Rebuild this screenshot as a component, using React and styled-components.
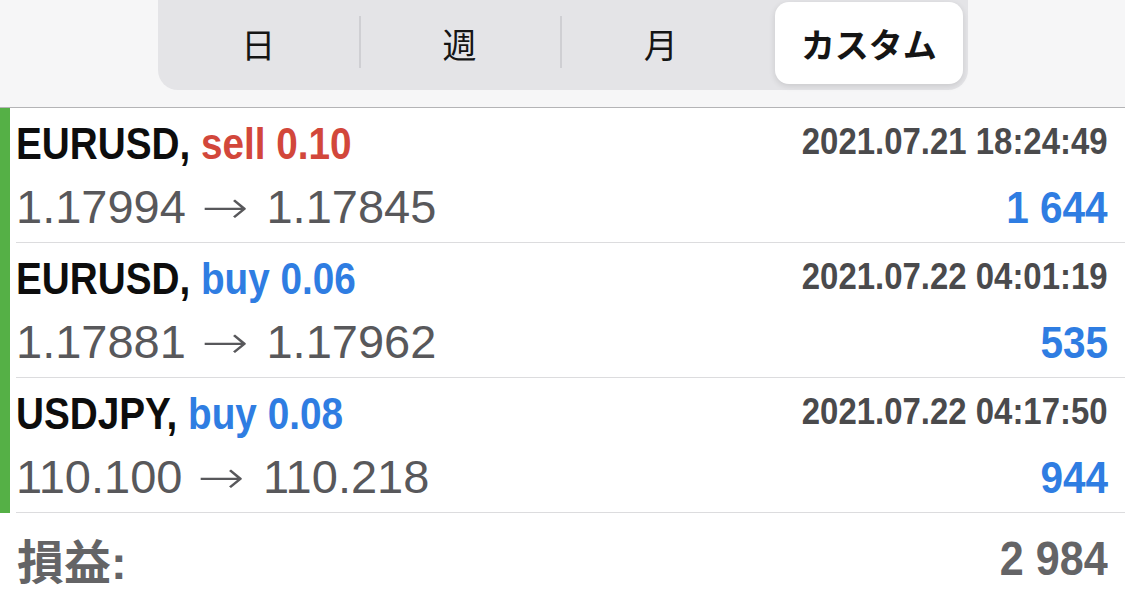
import styled, { createGlobalStyle } from 'styled-components';
import React from 'react';

const GlobalStyle = createGlobalStyle`
  html, body {
    margin: 0;
    padding: 0;
    background: #ffffff;
  }
  body {
    font-family: "Liberation Sans", Arial, "Noto Sans CJK JP", sans-serif;
    overflow: hidden;
  }
`;

const Page = styled.div`
  width: 1125px;
  height: 599px;
  display: flex;
  flex-direction: column;
  background: #ffffff;
`;

const Header = styled.div`
  flex-shrink: 0;
  height: 107px;
  display: flex;
  justify-content: center;
  align-items: flex-start;
  background: #f6f6f7;
  border-bottom: 1px solid #b4b4b6;
`;

const Segmented = styled.div`
  width: 810px;
  height: 90px;
  box-sizing: border-box;
  padding: 2px 5px 6px 0;
  display: grid;
  grid-template-columns: repeat(4, 1fr);
  background: #e4e4e7;
  border-radius: 0 0 20px 20px;
`;

const Segment = styled.div`
  position: relative;
  display: flex;
  align-items: center;
  justify-content: center;
  font-family: "Noto Sans CJK JP", sans-serif;
  font-size: 34px;
  font-weight: ${(p) => (p.$active ? 700 : 400)};
  color: #151515;
  border-radius: 14px;
  background: ${(p) => (p.$active ? '#ffffff' : 'transparent')};
  box-shadow: ${(p) => (p.$active ? '0 2px 6px rgba(0,0,0,0.12)' : 'none')};
  margin-left: ${(p) => (p.$active ? '14px' : '0')};

  &::before {
    content: '';
    display: ${(p) => (p.$divider ? 'block' : 'none')};
    position: absolute;
    left: 0;
    top: 14px;
    bottom: 16px;
    width: 2px;
    background: #cfcfd3;
  }
`;

const List = styled.div`
  flex-shrink: 0;
  display: flex;
  flex-direction: column;
  border-left: 10px solid #55b046;
`;

const Row = styled.div`
  margin-left: 6px;
  padding: 8px 17px 0 0;
  height: 126px;
  display: flex;
  flex-direction: column;
  border-bottom: 1px solid #dcdcde;
`;

const Line = styled.div`
  height: ${(p) => p.$h}px;
  display: flex;
  justify-content: space-between;
  align-items: ${(p) => (p.$baseline ? 'baseline' : 'center')};
`;

/* iOS uses a condensed bold face; squeeze Liberation Sans Bold to match */
const Narrow = styled.div`
  display: inline-block;
  font-family: "Liberation Sans", Arial, sans-serif;
  font-weight: 700;
  white-space: nowrap;
  transform: scaleX(${(p) => p.$sx || 0.86});
  transform-origin: ${(p) => (p.$right ? 'right' : 'left')} center;
`;

const Title = styled(Narrow)`
  font-size: 45px;
  line-height: 56px;
  color: #0d0d0d;
`;

const Side = styled.span`
  color: ${(p) => (p.$sell ? '#d2473b' : '#2f7de2')};
`;

const Time = styled(Narrow)`
  font-size: 37px;
  color: #4a4a4c;
  margin-bottom: 5px;
`;

const Prices = styled.div`
  font-family: "Liberation Sans", Arial, sans-serif;
  font-size: 47px;
  line-height: 70px;
  color: #58585b;
  white-space: nowrap;
`;

const Arrow = styled.span`
  display: inline-block;
  font-family: "DejaVu Sans", sans-serif;
  font-weight: 300;
  font-size: 46px;
  margin: 0 22px 0 20px;
  transform: scaleX(1.22);
`;

const Profit = styled(Narrow)`
  font-size: 45px;
  color: #2f7de2;
`;

const Footer = styled.div`
  flex: 1;
  display: flex;
  justify-content: space-between;
  align-items: center;
  padding: 4px 17px 0 17px;
  color: #646466;
  font-weight: 700;
`;

const FooterLabel = styled.div`
  font-family: "Liberation Sans", "Noto Sans CJK JP", sans-serif;
  font-size: 47px;
`;

const FooterValue = styled(Narrow)`
  font-size: 49px;
`;

const trades = [
  { symbol: 'EURUSD', side: 'sell', lots: '0.10', time: '2021.07.21 18:24:49', open: '1.17994', close: '1.17845', profit: '1 644' },
  { symbol: 'EURUSD', side: 'buy', lots: '0.06', time: '2021.07.22 04:01:19', open: '1.17881', close: '1.17962', profit: '535' },
  { symbol: 'USDJPY', side: 'buy', lots: '0.08', time: '2021.07.22 04:17:50', open: '110.100', close: '110.218', profit: '944' },
];

const tabs = ['日', '週', '月', 'カスタム'];

function App() {
  return (
    <Page>
      <GlobalStyle />
      <Header>
        <Segmented>
          {tabs.map((t, i) => (
            <Segment key={t} $active={i === 3} $divider={i === 1 || i === 2}>
              {t}
            </Segment>
          ))}
        </Segmented>
      </Header>
      <List>
        {trades.map((t, i) => (
          <Row key={i}>
            <Line $h={56}>
              <Title $sx={0.86}>
                {t.symbol}, <Side $sell={t.side === 'sell'}>{t.side} {t.lots}</Side>
              </Title>
              <Time $right $sx={0.89}>{t.time}</Time>
            </Line>
            <Line $h={70} $baseline>
              <Prices>
                {t.open}<Arrow>→</Arrow>{t.close}
              </Prices>
              <Profit $right $sx={0.9}>{t.profit}</Profit>
            </Line>
          </Row>
        ))}
      </List>
      <Footer>
        <FooterLabel>損益:</FooterLabel>
        <FooterValue $right $sx={0.88}>2 984</FooterValue>
      </Footer>
    </Page>
  );
}

export default App;
